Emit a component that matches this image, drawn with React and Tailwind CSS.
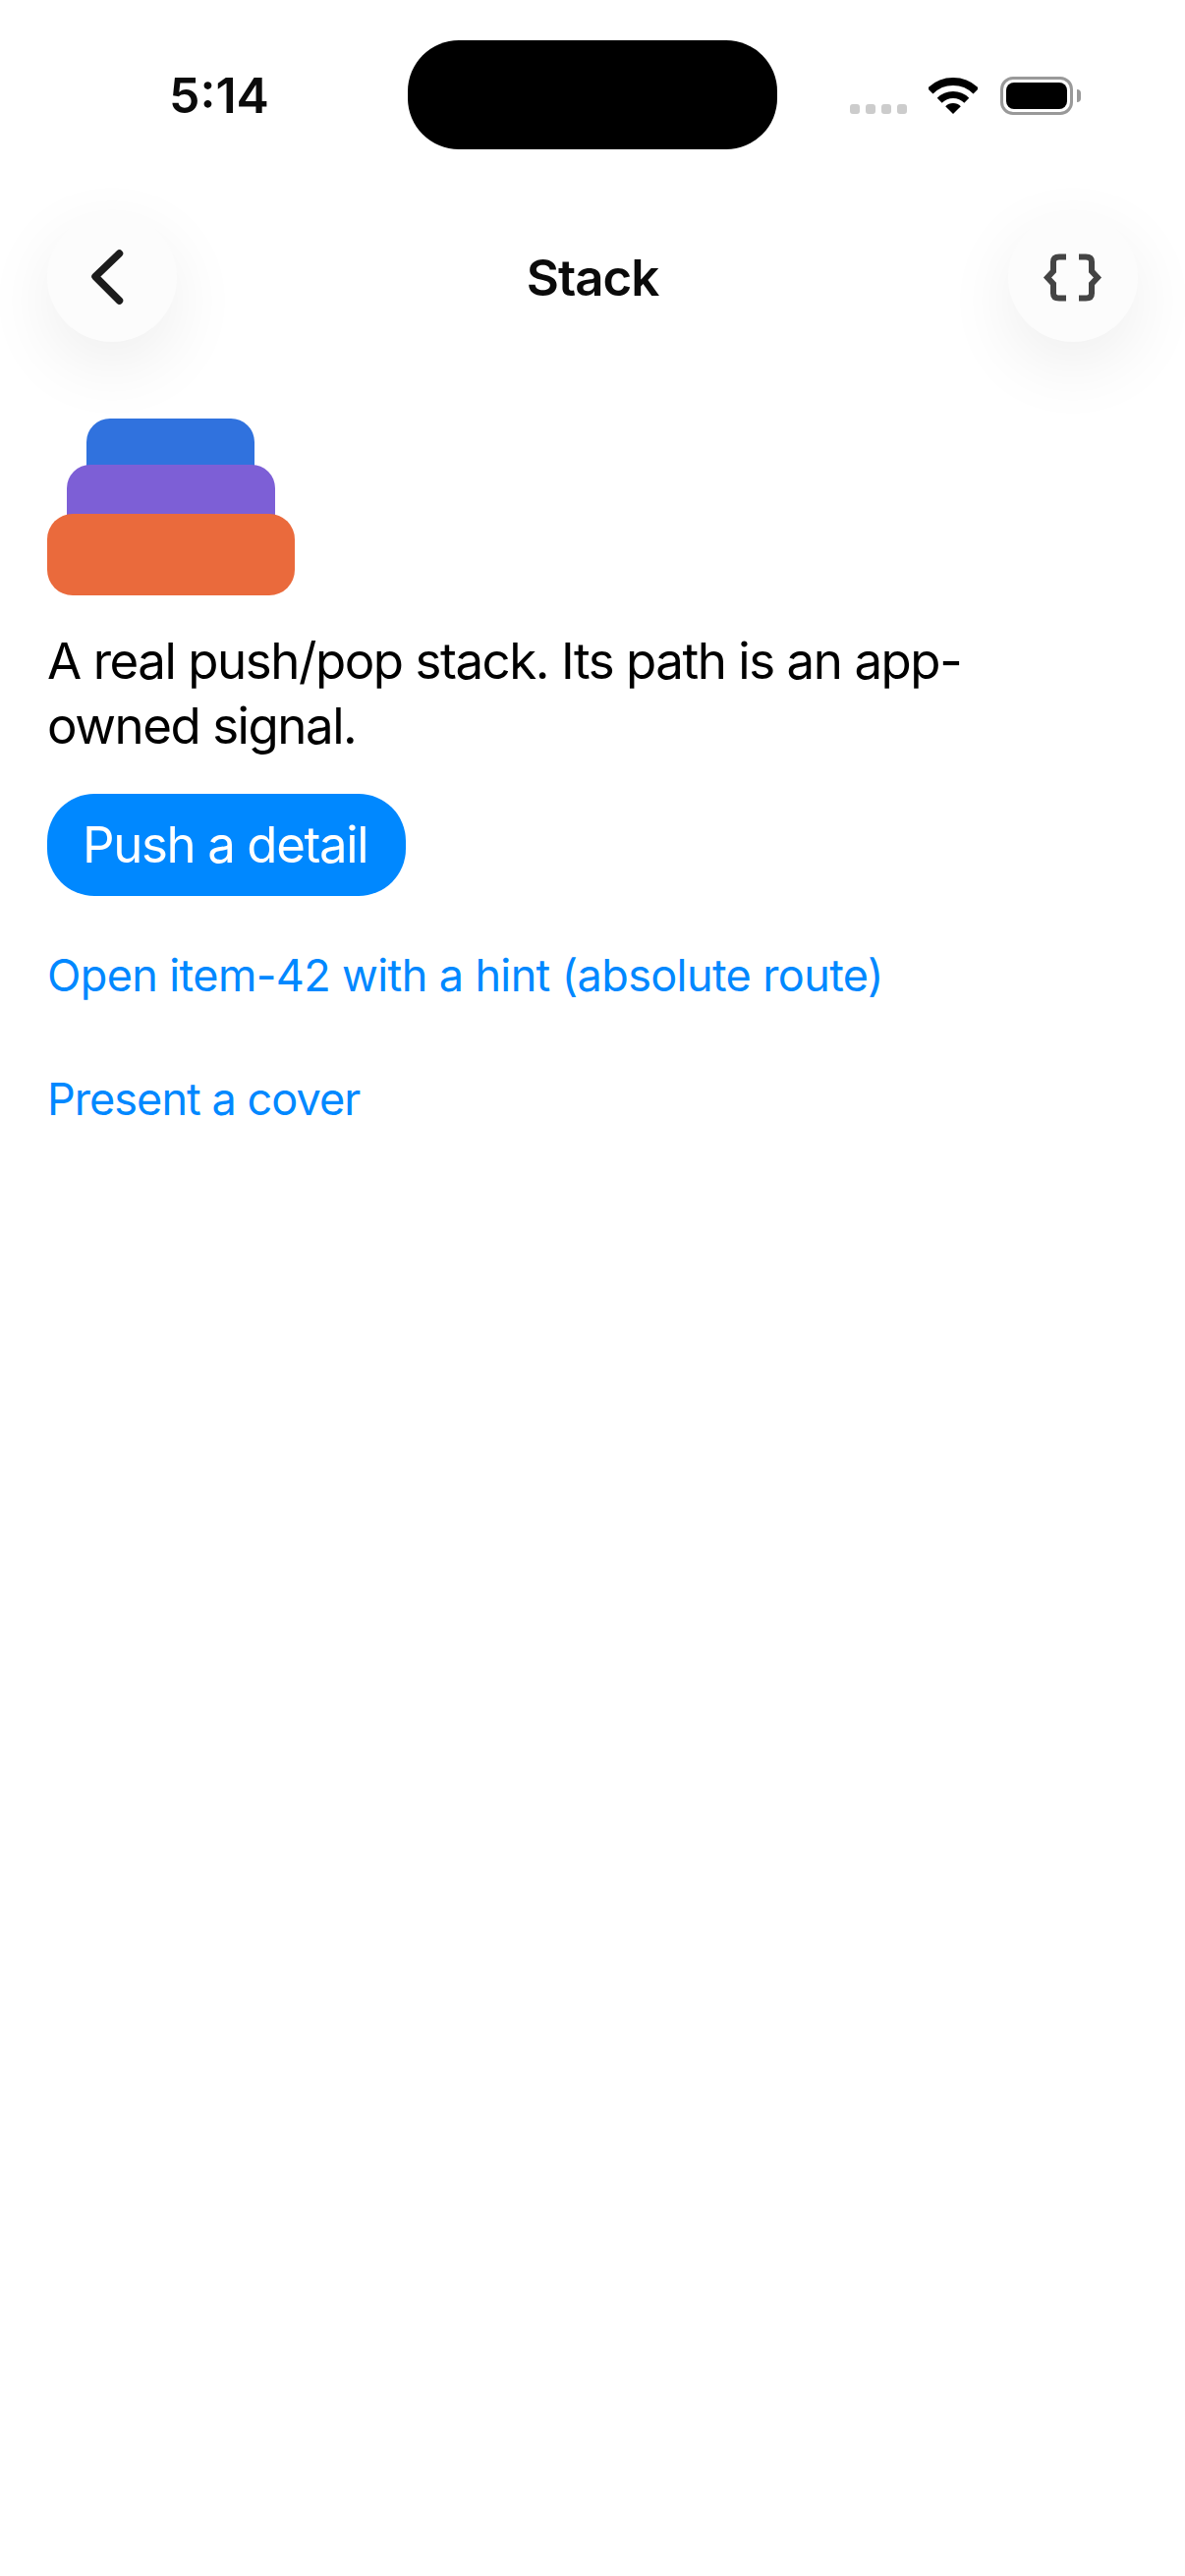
export default function App() {
  const font = { fontFamily: "Inter, 'Liberation Sans', sans-serif" };
  return (
    <div style={font} className="w-[1206px] h-[2622px] bg-white flex flex-col overflow-hidden">
      <div className="relative h-[152px] mt-[41px] shrink-0 flex items-center justify-center">
        <div className="absolute left-[172px] top-[26px] text-[50px] leading-[60px] font-semibold text-[#0b0b0b]">5:14</div>
        <div className="w-[376px] h-[111px] -mt-[41px] bg-black rounded-[52px]" />
        <div className="absolute left-[865px] top-[65px] flex gap-[6px]">
          <div className="w-[10px] h-[10px] rounded-[3px] bg-[#cccccc]" />
          <div className="w-[10px] h-[10px] rounded-[3px] bg-[#cccccc]" />
          <div className="w-[10px] h-[10px] rounded-[3px] bg-[#cccccc]" />
          <div className="w-[10px] h-[10px] rounded-[3px] bg-[#cccccc]" />
        </div>
        <svg className="absolute left-[945px] top-[38px]" width="50" height="37" viewBox="0 0 50 37">
          <path d="M1.67 13.67A33 33 0 0 1 48.33 13.67" fill="none" stroke="#000" strokeWidth="8" />
          <path d="M11.21 23.21A19.5 19.5 0 0 1 38.79 23.21" fill="none" stroke="#000" strokeWidth="7" />
          <path d="M25 37L17.2 29.2A11 11 0 0 1 32.8 29.2Z" fill="#000" />
        </svg>
        <div className="absolute left-[1018px] top-[37px] w-[74px] h-[39px] rounded-[13px] border-[3px] border-[#999999] p-[3px]">
          <div className="w-full h-full bg-black rounded-[8px]" />
        </div>
        <div className="absolute left-[1096px] top-[50px] w-[4px] h-[13px] bg-[#999999] rounded-r-[4px]" />
      </div>

      <div className="mt-[23px] px-[48px] flex items-center justify-between shrink-0">
        <button className="w-[132px] h-[132px] rounded-full bg-[#fcfcfc] shadow-[0_24px_72px_rgba(0,0,0,0.07)] flex items-center justify-center">
          <svg width="40" height="60" viewBox="0 0 40 60" className="-ml-[6px]">
            <path d="M30.5 6.5L6 30L30.5 54.5" transform="translate(0,-0.5)" fill="none" stroke="#1c1c1c" strokeWidth="7.5" strokeLinecap="round" strokeLinejoin="round" />
          </svg>
        </button>
        <div className="text-[51px] leading-[60px] font-semibold text-[#0b0b0b] tracking-[-1px] mt-[1px]">Stack</div>
        <button className="w-[132px] h-[132px] rounded-full bg-[#fcfcfc] shadow-[0_24px_72px_rgba(0,0,0,0.07)] flex items-center justify-center">
          <svg width="61" height="49" viewBox="0 0 61 49" className="blur-[0.6px]">
            <path d="M24 3.5H17Q11 3.5 11 8.5V18L5 24.5L11 31V40.5Q11 45.5 17 45.5H24" fill="none" stroke="#444444" strokeWidth="6" />
            <path d="M37 3.5H44Q50 3.5 50 8.5V18L56 24.5L50 31V40.5Q50 45.5 44 45.5H37" fill="none" stroke="#444444" strokeWidth="6" />
          </svg>
        </button>
      </div>

      <div className="mt-[78px] px-[48px] flex flex-col items-start">
        <div className="relative w-[252px] h-[180px]">
          <div className="absolute left-[40px] top-0 w-[171px] h-[80px] rounded-[24px] bg-[#3072de]" />
          <div className="absolute left-[20px] top-[47px] w-[212px] h-[80px] rounded-[24px] bg-[#7d5fd6]" />
          <div className="absolute left-0 top-[97px] w-[252px] h-[83px] rounded-[26px] bg-[#ea6a3c]" />
        </div>
        <p className="mt-[34px] w-[960px] text-[51px] leading-[66px] text-black tracking-[-1.45px]">A real push/pop stack. Its path is an app-owned signal.</p>
        <button className="mt-[36px] h-[104px] pl-[36px] pr-[39px] rounded-[48px] bg-[#0088ff] text-white text-[51px] tracking-[-1.4px]">Push a detail</button>
        <div className="mt-[54px] text-[45px] leading-[54px] text-[#0088ff] tracking-[-0.62px]">Open item-42 with a hint (absolute route)</div>
        <div className="mt-[72px] text-[45px] leading-[54px] text-[#0088ff] tracking-[-0.95px]">Present a cover</div>
      </div>
    </div>
  );
}
